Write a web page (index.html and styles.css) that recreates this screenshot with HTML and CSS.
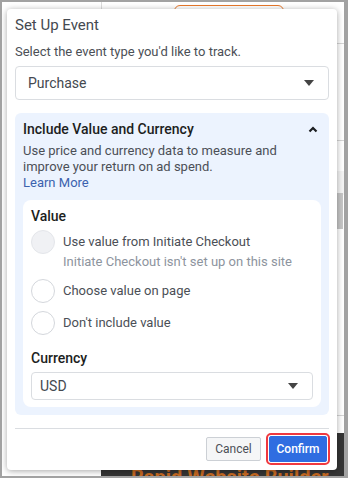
FILE: index.html
```html
<!DOCTYPE html>
<html>
<head>
<meta charset="utf-8">
<link rel="stylesheet" href="styles.css">
</head>
<body>
<div class="frame">
  <div class="bg-vline"></div>
  <div class="bg-orange"></div>
  <div class="bg-hline bg-hline-1"></div>
  <div class="bg-hline bg-hline-2"></div>
  <div class="bg-band"></div>
  <div class="bg-scroll"></div>
  <div class="bg-hline bg-hline-3"></div>
  <div class="bg-dark"><span>Rapid Website Builder</span></div>

  <div class="popup">
    <div class="title">Set Up Event</div>
    <div class="subtitle">Select the event type you'd like to track.</div>
    <div class="select select-lg">
      <span>Purchase</span>
      <svg class="caret" width="10" height="6" viewBox="0 0 10 6"><path d="M0 0H10L5 6Z" fill="#444"/></svg>
    </div>

    <div class="section">
      <div class="section-head">
        <span>Include Value and Currency</span>
        <svg width="10" height="7" viewBox="0 0 10 7"><path d="M1.5 5.5L5 2L8.5 5.5" fill="none" stroke="#1c1e21" stroke-width="2.2"/></svg>
      </div>
      <div class="desc">Use price and currency data to measure and improve your return on ad spend.</div>
      <div class="learn">Learn More</div>

      <div class="card">
        <div class="label">Value</div>
        <div class="radio-row first">
          <span class="radio disabled"></span>
          <div class="radio-text">
            <div>Use value from Initiate Checkout</div>
            <div class="sub">Initiate Checkout isn't set up on this site</div>
          </div>
        </div>
        <div class="radio-row">
          <span class="radio"></span>
          <div class="radio-text"><div>Choose value on page</div></div>
        </div>
        <div class="radio-row">
          <span class="radio"></span>
          <div class="radio-text"><div>Don't include value</div></div>
        </div>
        <div class="label currency">Currency</div>
        <div class="select select-sm">
          <span>USD</span>
          <svg class="caret" width="10" height="6" viewBox="0 0 10 6"><path d="M0 0H10L5 6Z" fill="#444"/></svg>
        </div>
      </div>
    </div>

    <div class="divider"></div>
    <div class="buttons">
      <button class="btn cancel">Cancel</button>
      <button class="btn confirm">Confirm</button>
    </div>
  </div>
</div>
</body>
</html>
```

FILE: styles.css
```css
* { box-sizing: border-box; }
html, body { margin: 0; padding: 0; }
body {
  width: 348px;
  height: 478px;
  background: #a2a2a2;
  font-family: Roboto, "Liberation Sans", sans-serif;
  overflow: hidden;
}
.frame {
  position: relative;
  margin: 2px 4px 2px 2px;
  width: 342px;
  height: 474px;
  background: #fff;
  overflow: hidden;
}
.bg-vline {
  position: absolute;
  left: 99px; top: 0;
  width: 1px; height: 20px;
  background: #dcdcdc;
}
.bg-orange {
  position: absolute;
  left: 172px; top: 3px;
  width: 110px; height: 30px;
  border: 1px solid #e8782a;
  border-radius: 6px;
}
.bg-hline {
  position: absolute;
  left: 99px; right: 0;
  height: 1px;
  background: #d6d6d6;
}
.bg-hline-1 { top: 41px; }
.bg-hline-2 { top: 138px; }
.bg-hline-3 { top: 413px; }
.bg-band {
  position: absolute;
  left: 99px; right: 0;
  top: 169px; height: 24px;
  background: #f4f4f4;
}
.bg-scroll {
  position: absolute;
  right: 1px; top: 191px;
  width: 6px; height: 36px;
  background: #c6c6c6;
}
.bg-dark {
  position: absolute;
  left: 99px; right: 0;
  top: 431px; bottom: 0;
  background: #353535;
  color: #c86a22;
  font-size: 20px;
  font-weight: bold;
  padding: 32px 0 0 30px;
  white-space: nowrap;
}

.popup {
  position: absolute;
  left: 5px; top: 7px;
  width: 330px; height: 461px;
  background: #fff;
  border-radius: 4px;
  box-shadow: 0 1px 6px rgba(0,0,0,0.35);
  padding: 6px 8px 0;
}
.title {
  font-size: 15px;
  line-height: 20px;
  color: #444950;
}
.subtitle {
  margin-top: 8px;
  font-size: 13px;
  line-height: 18px;
  color: #4b4f56;
}
.select {
  display: flex;
  align-items: center;
  justify-content: space-between;
  border: 1px solid #dadde1;
  border-radius: 4px;
  background: #fff;
  color: #444950;
}
.select-lg {
  margin-top: 5px;
  height: 34px;
  padding: 0 14px 0 12px;
  font-size: 14px;
}
.select-sm {
  margin-top: 4px;
  height: 28px;
  padding: 0 14px 0 8px;
  font-size: 14px;
}
.section {
  margin-top: 13px;
  background: #ecf3fe;
  border-radius: 6px;
  padding: 6px 8px 8px;
}
.section-head {
  display: flex;
  align-items: center;
  justify-content: space-between;
  font-size: 14px;
  line-height: 20px;
  font-weight: 500;
  color: #1c1e21;
  padding-right: 3px;
}
.desc {
  margin-top: 4px;
  font-size: 13px;
  line-height: 16px;
  color: #4b4f56;
}
.learn {
  font-size: 13px;
  line-height: 16px;
  color: #3b62ae;
}
.card {
  margin-top: 9px;
  background: #fff;
  border-radius: 8px;
  padding: 6px 8px 7px;
}
.label {
  font-size: 14px;
  line-height: 20px;
  font-weight: 500;
  color: #1c1e21;
}
.label.currency { margin-top: 13px; }
.radio-row {
  display: flex;
  gap: 8px;
  margin-top: 8px;
}
.radio-row.first { margin-top: 4px; }
.radio {
  flex: none;
  width: 24px;
  height: 24px;
  border-radius: 50%;
  border: 1px solid #d4d7dc;
  background: #fff;
}
.radio.disabled {
  background: #f0f1f4;
  border-color: #e4e6ea;
}
.radio-text {
  font-size: 13px;
  line-height: 24px;
  color: #4b4f56;
}
.radio-text .sub {
  color: #8d949e;
  line-height: 18px;
  margin-top: -1px;
}
.divider {
  margin-top: 13px;
  height: 1px;
  background: #dadde1;
}
.buttons {
  display: flex;
  justify-content: flex-end;
  gap: 8px;
  margin-top: 8px;
  padding-right: 2px;
}
.btn {
  font-family: Roboto, "Liberation Sans", sans-serif;
  font-size: 12px;
  height: 24px;
  border-radius: 2px;
  padding: 0;
  cursor: pointer;
}
.cancel {
  width: 55px;
  background: #f5f6f7;
  border: 1px solid #ccd0d5;
  color: #4b4f56;
}
.confirm {
  width: 58px;
  height: 26px;
  margin-top: -1px;
  background: #2f6de1;
  border: 1px solid #2f6de1;
  color: #fff;
  font-weight: 500;
  outline: 2px solid #f0393f;
  outline-offset: 1px;
}
```
